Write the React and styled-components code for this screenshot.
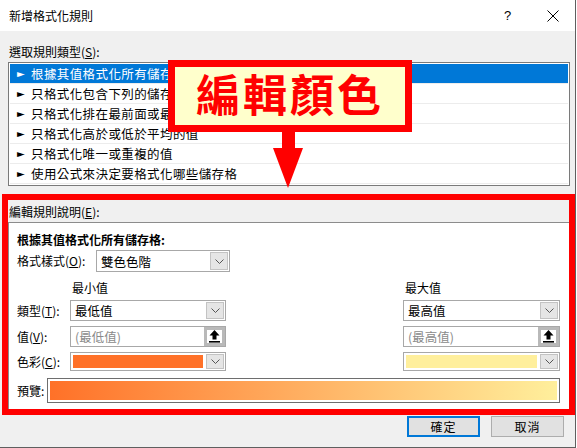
import React from 'react';
import styled, { createGlobalStyle } from 'styled-components';

const GlobalStyle = createGlobalStyle`
  html, body {
    margin: 0;
    padding: 0;
    background: #ffffff;
  }
  body {
    font-family: "Noto Sans CJK TC", "Noto Sans", sans-serif;
    font-size: 12px;
    color: #000;
  }
  * { box-sizing: border-box; }
`;

const Dialog = styled.div`
  position: relative;
  width: 576px;
  height: 448px;
  background: #f0f0f0;
  border-right: 1px solid #5f5f5f;
  border-bottom: 1px solid #5f5f5f;
  overflow: hidden;
`;

const TitleBar = styled.div`
  height: 31px;
  background: #ffffff;
  display: flex;
  align-items: center;
  justify-content: space-between;
  padding-left: 9px;
`;

const Title = styled.div`
  line-height: 16px;
`;

const TitleButtons = styled.div`
  display: flex;
  height: 100%;
`;

const TitleButton = styled.div`
  width: 45px;
  display: flex;
  align-items: center;
  justify-content: center;
  font-family: "Liberation Sans", sans-serif;
  font-size: 13px;
`;

const Body = styled.div`
  padding: 13px 5px 0 8px;
`;

const Caption = styled.div`
  line-height: 16px;
  padding-left: 1px;
  margin-top: ${p => p.$top || 0}px;
`;

const RuleList = styled.div`
  margin-top: 2px;
  width: 562px;
  height: 124px;
  border: 1px solid #7a7a7a;
  background: #ffffff;
  padding: 1px;
`;

const RuleItem = styled.div`
  height: 20px;
  display: flex;
  align-items: center;
  padding-left: 7px;
  border-bottom: 1px solid #ececec;
  background: ${p => (p.$selected ? '#0078d7' : 'transparent')};
  color: ${p => (p.$selected ? '#ffffff' : '#000000')};
  white-space: nowrap;
  font-size: 12.5px;
  letter-spacing: 0.4px;
`;

const Bullet = styled.span`
  width: 14px;
  font-family: "DejaVu Sans", sans-serif;
  font-size: 10px;
  display: inline-block;
`;

const Panel = styled.div`
  margin-top: 2px;
  width: 562px;
  height: 188px;
  background: #ffffff;
  border: 1px solid #8c8c8c;
  padding: 9px 9px 6px 8px;
  display: flex;
  flex-direction: column;
`;

const Heading = styled.div`
  line-height: 16px;
  font-weight: 700;
`;

const StyleRow = styled.div`
  margin-top: 2px;
  display: flex;
  align-items: center;
  height: 22px;
`;

const RowLabel = styled.div`
  width: ${p => p.$w || 'auto'};
  line-height: 16px;
  white-space: nowrap;
`;

const ValueGrid = styled.div`
  margin-top: 8px;
  display: grid;
  grid-template-columns: 53px 156px 1fr 157px;
  grid-template-rows: 15px 21px 21px 19px;
  row-gap: 5px;
  align-items: center;
`;

const ColHead = styled.div`
  grid-column: ${p => p.$col};
  padding-left: 2px;
  line-height: 15px;
`;

const Field = styled.div`
  grid-column: ${p => p.$col || 'auto'};
  width: ${p => p.$w || '100%'};
  height: ${p => p.$h || '100%'};
  display: flex;
  align-items: stretch;
  border: 1px solid #a8a8a8;
  background: #ffffff;
`;

const FieldText = styled.div`
  flex: 1;
  display: flex;
  align-items: center;
  padding-left: 4px;
  color: ${p => (p.$muted ? '#8a8a8a' : '#000')};
  font-size: 12.5px;
`;

const DropButton = styled.div`
  width: 18px;
  margin: 1px;
  background: #e5e5e5;
  border: 1px solid #c3c3c3;
  display: flex;
  align-items: center;
  justify-content: center;
`;

const PickButton = styled.div`
  width: 21px;
  border: 3px solid #b9b9b9;
  background: #ffffff;
  display: flex;
  align-items: center;
  justify-content: center;
`;

const Swatch = styled.div`
  flex: 1;
  margin: 2px;
  background: ${p => p.$color};
`;

const PreviewRow = styled.div`
  margin-top: 7px;
  display: flex;
  align-items: center;
`;

const PreviewBox = styled.div`
  flex: 1;
  height: 25px;
  border: 1px solid #6e6e6e;
  background: #ffffff;
  padding: 2px;
`;

const Gradient = styled.div`
  height: 100%;
  background: linear-gradient(to right, #ff7128, #ffef9c);
`;

const Footer = styled.div`
  margin-top: 6px;
  display: flex;
  justify-content: flex-end;
  gap: 11px;
  padding-right: 6px;
`;

const Button = styled.div`
  width: 73px;
  height: 21px;
  display: flex;
  align-items: center;
  justify-content: center;
  background: #e1e1e1;
  border: ${p => (p.$primary ? '2px solid #0078d7' : '1px solid #adadad')};
  letter-spacing: 1px;
`;

const Highlight = styled.div`
  position: absolute;
  left: 2px;
  top: 194px;
  width: 573px;
  height: 221px;
  border: 6px solid #ff0000;
  pointer-events: none;
`;

const Callout = styled.div`
  position: absolute;
  left: 168px;
  top: 60px;
  width: 244px;
  height: 72px;
  border: 7px solid #ff0000;
  background: #ffffcc;
  color: #ff0000;
  font-weight: 700;
  font-size: 44px;
  letter-spacing: 3px;
  line-height: 50px;
  padding-bottom: 6px;
  display: flex;
  align-items: center;
  justify-content: center;
`;

const Arrow = styled.svg`
  position: absolute;
  left: 272px;
  top: 132px;
`;

const Chevron = () => (
  <svg width="9" height="5" viewBox="0 0 9 5">
    <path d="M0.5 0.5 L4.5 4.5 L8.5 0.5" fill="none" stroke="#555" strokeWidth="1" />
  </svg>
);

const UpArrow = () => (
  <svg width="11" height="13" viewBox="0 0 11 13">
    <path d="M5.5 0 L10.5 5.5 L7.5 5.5 L7.5 9.5 L3.5 9.5 L3.5 5.5 L0.5 5.5 Z" fill="#000" />
    <rect x="0" y="11" width="11" height="1.6" fill="#000" />
  </svg>
);

const rules = [
  '根據其值格式化所有儲存格',
  '只格式化包含下列的儲存格',
  '只格式化排在最前面或最後面的值',
  '只格式化高於或低於平均的值',
  '只格式化唯一或重複的值',
  '使用公式來決定要格式化哪些儲存格',
];

export default function App() {
  return (
    <>
      <GlobalStyle />
      <Dialog>
        <TitleBar>
          <Title>新增格式化規則</Title>
          <TitleButtons>
            <TitleButton>?</TitleButton>
            <TitleButton>
              <svg width="12" height="12" viewBox="0 0 12 12">
                <path d="M0.5 0.5 L11.5 11.5 M11.5 0.5 L0.5 11.5" stroke="#000" strokeWidth="1" />
              </svg>
            </TitleButton>
          </TitleButtons>
        </TitleBar>

        <Body>
          <Caption>選取規則類型(<u>S</u>):</Caption>
          <RuleList>
            {rules.map((r, i) => (
              <RuleItem key={r} $selected={i === 0}>
                <Bullet>►</Bullet>
                {r}
              </RuleItem>
            ))}
          </RuleList>

          <Caption $top={18}>編輯規則說明(<u>E</u>):</Caption>
          <Panel>
            <Heading>根據其值格式化所有儲存格:</Heading>
            <StyleRow>
              <RowLabel $w="79px">格式樣式(<u>O</u>):</RowLabel>
              <Field $w="134px" $h="22px">
                <FieldText>雙色色階</FieldText>
                <DropButton><Chevron /></DropButton>
              </Field>
            </StyleRow>

            <ValueGrid>
              <ColHead $col={2}>最小值</ColHead>
              <ColHead $col={4}>最大值</ColHead>

              <RowLabel>類型(<u>T</u>):</RowLabel>
              <Field $col={2}>
                <FieldText>最低值</FieldText>
                <DropButton><Chevron /></DropButton>
              </Field>
              <Field $col={4}>
                <FieldText>最高值</FieldText>
                <DropButton><Chevron /></DropButton>
              </Field>

              <RowLabel>值(<u>V</u>):</RowLabel>
              <Field $col={2}>
                <FieldText $muted>(最低值)</FieldText>
                <PickButton><UpArrow /></PickButton>
              </Field>
              <Field $col={4}>
                <FieldText $muted>(最高值)</FieldText>
                <PickButton><UpArrow /></PickButton>
              </Field>

              <RowLabel>色彩(<u>C</u>):</RowLabel>
              <Field $col={2}>
                <Swatch $color="#ff7128" />
                <DropButton><Chevron /></DropButton>
              </Field>
              <Field $col={4}>
                <Swatch $color="#ffef9c" />
                <DropButton><Chevron /></DropButton>
              </Field>
            </ValueGrid>

            <PreviewRow>
              <RowLabel $w="30px">預覽:</RowLabel>
              <PreviewBox>
                <Gradient />
              </PreviewBox>
            </PreviewRow>
          </Panel>

          <Footer>
            <Button $primary>確定</Button>
            <Button>取消</Button>
          </Footer>
        </Body>

        <Highlight />
        <Callout>編輯顏色</Callout>
        <Arrow width="32" height="57" viewBox="0 0 32 57">
          <rect x="10" y="0" width="13" height="17" fill="#ff0000" />
          <polygon points="1,16 31,16 16,56" fill="#ff0000" />
        </Arrow>
      </Dialog>
    </>
  );
}
